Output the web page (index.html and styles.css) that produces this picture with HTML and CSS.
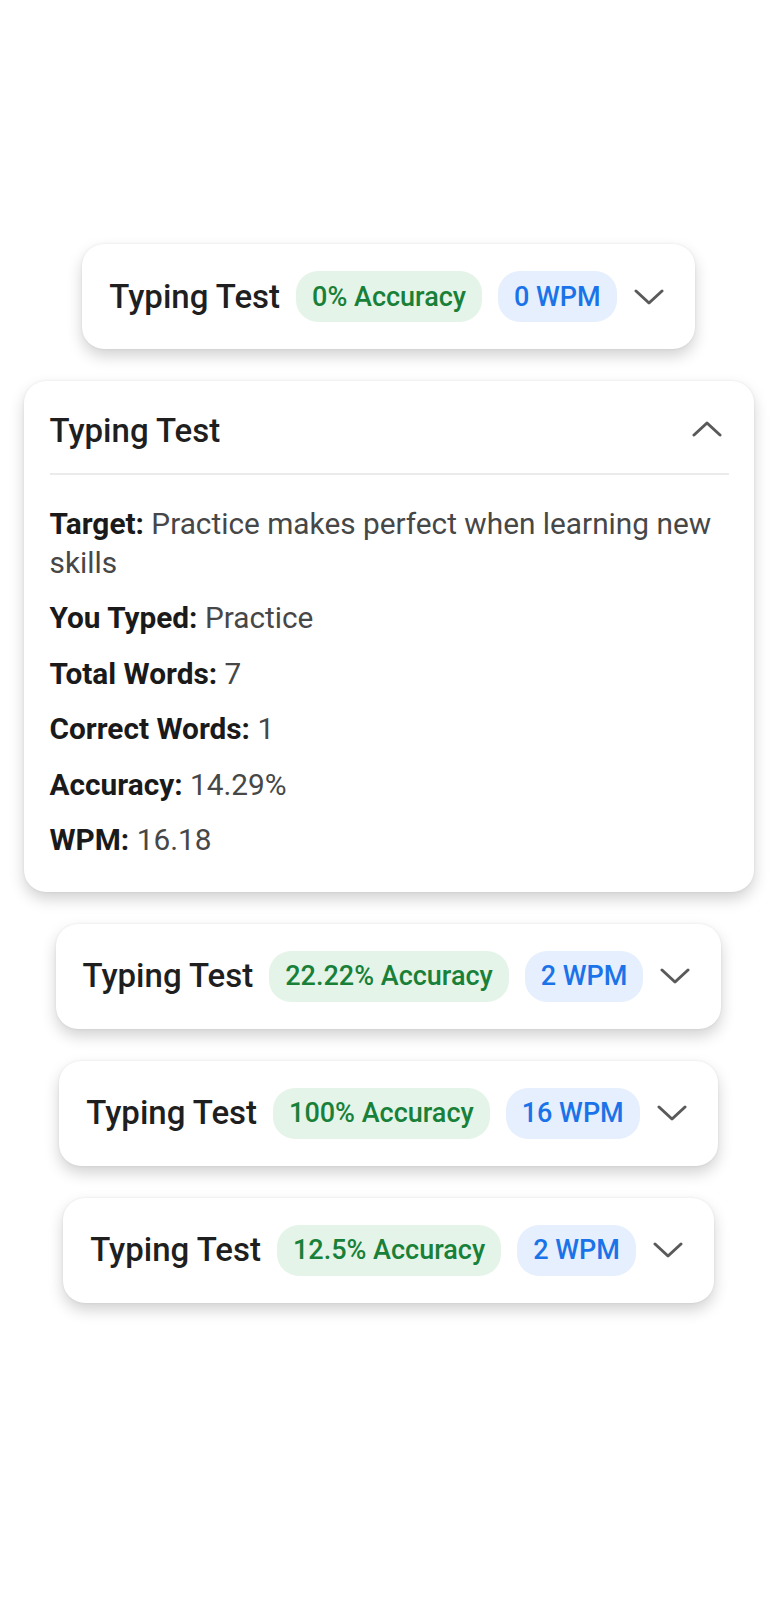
FILE: index.html
```html
<!DOCTYPE html>
<html lang="en">
<head>
<meta charset="utf-8">
<title>Typing Tests</title>
<link rel="stylesheet" href="styles.css">
</head>
<body>
<main class="list">
  <section class="card card-collapsed">
    <h2 class="title">Typing Test</h2>
    <span class="badge badge-green">0% Accuracy</span>
    <span class="badge badge-blue">0 WPM</span>
    <svg class="chev" viewBox="0 0 30 16"><path d="M2 2 L15 14 L28 2"/></svg>
  </section>

  <section class="card card-open">
    <header class="open-head">
      <h2 class="title">Typing Test</h2>
      <svg class="chev chev-up" viewBox="0 0 30 16"><path d="M2 14 L15 2 L28 14"/></svg>
    </header>
    <div class="details">
      <p><b>Target:</b> Practice makes perfect when learning new skills</p>
      <p><b>You Typed:</b> Practice</p>
      <p><b>Total Words:</b> 7</p>
      <p><b>Correct Words:</b> 1</p>
      <p><b>Accuracy:</b> 14.29%</p>
      <p><b>WPM:</b> 16.18</p>
    </div>
  </section>

  <section class="card card-collapsed">
    <h2 class="title">Typing Test</h2>
    <span class="badge badge-green">22.22% Accuracy</span>
    <span class="badge badge-blue">2 WPM</span>
    <svg class="chev" viewBox="0 0 30 16"><path d="M2 2 L15 14 L28 2"/></svg>
  </section>

  <section class="card card-collapsed">
    <h2 class="title">Typing Test</h2>
    <span class="badge badge-green">100% Accuracy</span>
    <span class="badge badge-blue">16 WPM</span>
    <svg class="chev" viewBox="0 0 30 16"><path d="M2 2 L15 14 L28 2"/></svg>
  </section>

  <section class="card card-collapsed">
    <h2 class="title">Typing Test</h2>
    <span class="badge badge-green">12.5% Accuracy</span>
    <span class="badge badge-blue">2 WPM</span>
    <svg class="chev" viewBox="0 0 30 16"><path d="M2 2 L15 14 L28 2"/></svg>
  </section>
</main>
</body>
</html>
```

FILE: styles.css
```css
* { box-sizing: border-box; }

html, body {
  margin: 0;
  padding: 0;
  background: #ffffff;
  font-family: Roboto, "Noto Sans", "Liberation Sans", sans-serif;
  color: #1f1f1f;
}

.list {
  display: flex;
  flex-direction: column;
  align-items: center;
  gap: 32px;
  padding-top: 244px;
  padding-bottom: 300px;
}

.card {
  background: #fff;
  border-radius: 22px;
  box-shadow: 0 7px 15px rgba(0, 0, 0, 0.18), 0 0 3px rgba(0, 0, 0, 0.07);
}

.card-collapsed {
  display: flex;
  align-items: center;
  gap: 16px;
  height: 105px;
  padding: 0 31px 0 27px;
}

.title {
  margin: 0;
  font-size: 33px;
  font-weight: 500;
  line-height: 40px;
  color: #1f1f1f;
}

.badge {
  display: inline-flex;
  align-items: center;
  height: 51px;
  padding: 0 16px;
  border-radius: 22px;
  font-size: 27px;
  font-weight: 500;
}

.badge-green {
  background: #e4f4e8;
  color: #188038;
}

.badge-blue {
  background: #e6effd;
  color: #1a73e8;
}

.chev {
  width: 30px;
  height: 16px;
  margin-left: 1px;
  fill: none;
  stroke: #5a5a5a;
  stroke-width: 3;
  stroke-linecap: round;
  stroke-linejoin: round;
}

.card-open {
  width: 730px;
  padding: 30px 25px 33px 26px;
}

.open-head {
  display: flex;
  align-items: center;
  justify-content: space-between;
  padding-bottom: 22px;
  border-bottom: 2px solid #ebebeb;
}

.chev-up {
  margin-right: 7px;
  margin-top: -4px;
}

.details {
  padding-top: 29px;
}

.details p {
  margin: 0 0 16.4px;
  font-size: 29.8px;
  line-height: 39px;
  color: #474747;
}

.details p:last-child { margin-bottom: 0; }

.details b {
  font-weight: 700;
  color: #1a1a1a;
}
```
